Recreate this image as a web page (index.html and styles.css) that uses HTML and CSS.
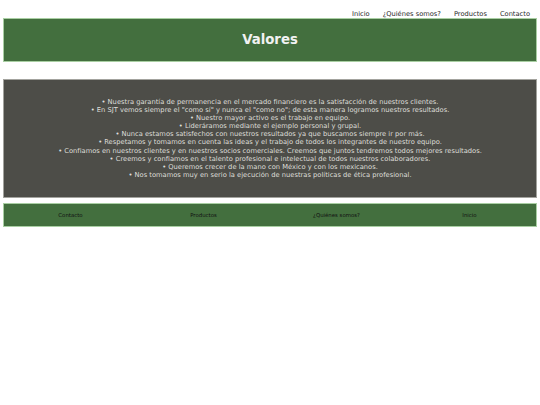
FILE: index.html
```html
<!DOCTYPE html>
<html lang="es">
<head>
<meta charset="utf-8">
<title>Valores</title>
<link rel="stylesheet" href="styles.css">
</head>
<body>
<div class="page">
  <nav class="topnav">
    <a href="#">Inicio</a>
    <a href="#">¿Quiénes somos?</a>
    <a href="#">Productos</a>
    <a href="#">Contacto</a>
  </nav>
  <header class="banner">
    <h1 class="title">Valores</h1>
  </header>
  <section class="values">
    <p>• Nuestra garantía de permanencia en el mercado financiero es la satisfacción de nuestros clientes.</p>
    <p>• En SJT vemos siempre el "como sí" y nunca el "como no"; de esta manera logramos nuestros resultados.</p>
    <p>• Nuestro mayor activo es el trabajo en equipo.</p>
    <p>• Lideráramos mediante el ejemplo personal y grupal.</p>
    <p>• Nunca estamos satisfechos con nuestros resultados ya que buscamos siempre ir por más.</p>
    <p>• Respetamos y tomamos en cuenta las ideas y el trabajo de todos los integrantes de nuestro equipo.</p>
    <p>• Confiamos en nuestros clientes y en nuestros socios comerciales. Creemos que juntos tendremos todos mejores resultados.</p>
    <p>• Creemos y confiamos en el talento profesional e intelectual de todos nuestros colaboradores.</p>
    <p>• Queremos crecer de la mano con México y con los mexicanos.</p>
    <p>• Nos tomamos muy en serio la ejecución de nuestras políticas de ética profesional.</p>
  </section>
  <footer class="footnav">
    <a href="#">Contacto</a>
    <a href="#">Productos</a>
    <a href="#">¿Quiénes somos?</a>
    <a href="#">Inicio</a>
  </footer>
</div>
</body>
</html>
```
FILE: styles.css
```css
html, body {
  margin: 0;
  padding: 0;
  background: #ffffff;
}

body {
  font-family: "DejaVu Sans", Verdana, sans-serif;
}

.page {
  padding: 0 3px;
}

.topnav {
  display: flex;
  justify-content: flex-end;
  gap: 13px;
  padding: 10px 7px 0 0;
  height: 8px;
  font-size: 6.7px;
  line-height: 8px;
}

.topnav a {
  color: #2a2a2a;
  text-decoration: none;
}

.banner {
  height: 42px;
  background: #436f3e;
  border: 1px solid #a9cfa3;
  display: flex;
  align-items: center;
  justify-content: center;
}

.title {
  margin: 0;
  color: #f2f2f2;
  font-size: 13.3px;
  font-weight: bold;
  line-height: 16px;
}

.values {
  margin-top: 17px;
  background: #4d4d48;
  border: 1px solid #a3a39e;
  padding: 18px 8px;
  text-align: center;
  color: #deded9;
  font-size: 6.72px;
  line-height: 8.1px;
}

.values p {
  margin: 0;
}

.footnav {
  margin-top: 5px;
  height: 22px;
  background: #436f3e;
  border: 1px solid #a9cfa3;
  display: grid;
  grid-template-columns: repeat(4, 1fr);
  align-items: center;
  justify-items: center;
  font-size: 5.4px;
}

.footnav a {
  color: #111111;
  text-decoration: none;
}
```
